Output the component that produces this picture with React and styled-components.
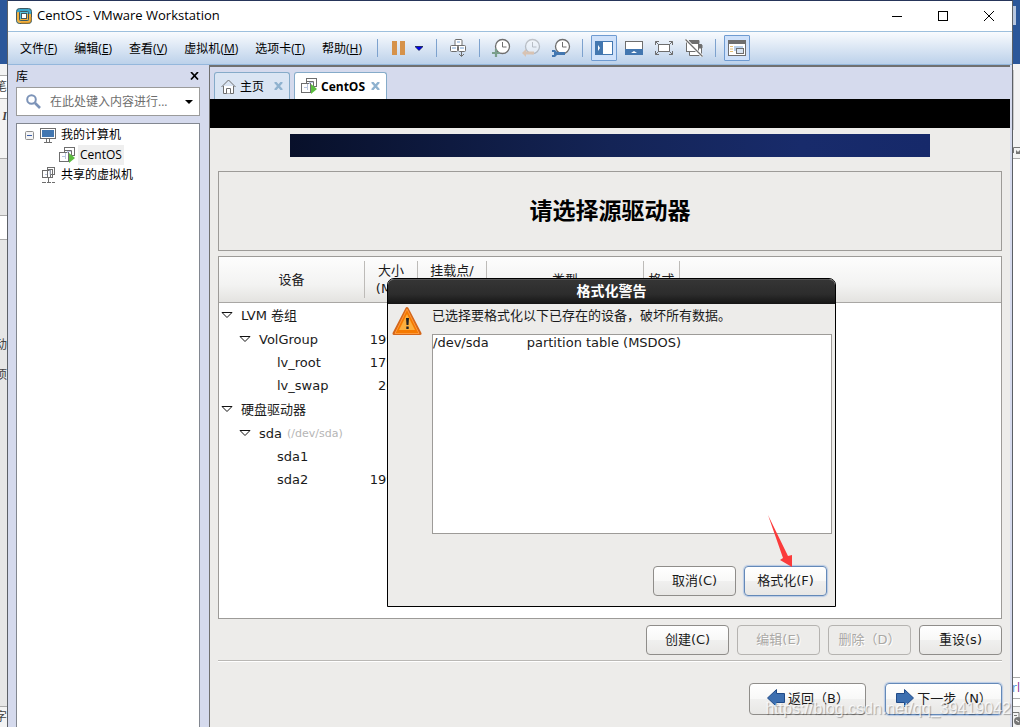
import React from 'react'
import styled, { createGlobalStyle } from 'styled-components'

const ROWS = [
  { name: 'LVM 卷组', level: 0, open: true },
  { name: 'VolGroup', level: 1, open: true, size: '19972' },
  { name: 'lv_root', level: 2, size: '17924' },
  { name: 'lv_swap', level: 2, size: '2048' },
  { name: '硬盘驱动器', level: 0, open: true },
  { name: 'sda', note: '(/dev/sda)', level: 1, open: true },
  { name: 'sda1', level: 2 },
  { name: 'sda2', level: 2, size: '19979' },
]

const MENUS = [
  ['文件', 'F'],
  ['编辑', 'E'],
  ['查看', 'V'],
  ['虚拟机', 'M'],
  ['选项卡', 'T'],
  ['帮助', 'H'],
]

export default function App() {
  return (
    <>
      <GlobalStyle />
      <Desktop>
        <LeftDocument />
        <Window>
          <TitleBar />
          <MenuBar />
          <Body>
            <Library />
            <Workspace>
              <Tabs>
                <Tab type="button">
                  <HomeIcon />
                  主页
                  <TabCloseIcon />
                </Tab>
                <Tab type="button" $active>
                  <MachineIcon />
                  CentOS
                  <TabCloseIcon />
                </Tab>
              </Tabs>
              <Blackout />
              <Installer />
            </Workspace>
          </Body>
        </Window>
        <RightDocument />
        <Watermark>https://blog.csdn.net/qq_39419042</Watermark>
      </Desktop>
    </>
  )
}

function LeftDocument() {
  return (
    <Strip>
      <Block $h={64} $bg="#2b579a" />
      <Block $h={11} $bg="#f3f3f3" />
      <Block $h={23} $bg="#fff" $line>笔</Block>
      <Block $h={60} $bg="linear-gradient(#ababab 1px, #f3f3f3 1px)"><Slant>I</Slant></Block>
      <Block $h={57} $bg="#e6e6e6" $line />
      <Block $h={24} $bg="#fff" $line />
      <Block $h={91} $bg="#e6e6e6" $line />
      <Block $h={30} $bg="#e6e6e6">动</Block>
      <Block $h={30} $bg="#e6e6e6">项</Block>
      <Block $h={316} $bg="#e6e6e6" />
      <Block $bg="#f3f3f3" $line>字</Block>
    </Strip>
  )
}

function RightDocument() {
  return (
    <Strip>
      <Block $h={6} $bg="#2b579a" />
      <Block $h={19} $bg="linear-gradient(90deg, #b8c7df 3px, #2b579a 3px)" />
      <Block $h={39} $bg="#2b579a" />
      <Block $h={6} $bg="#f3f3f3" />
      <Block $h={60} $bg="linear-gradient(90deg, #c9c9c9 1px, #f3f3f3 1px)" />
      <Block $h={12} $bg="#f3f3f3" />
      <Block $h={16} $bg="#f3f3f3">
        <svg width="7" height="9" viewBox="0 0 7 9">
          <path d="M.5 7V1.500H7" fill="none" stroke="#777" />
          <path d="M3 4l2 2 2-2v4H3z" fill="#777" />
        </svg>
      </Block>
      <Block $h={519} $bg="#fff" $line />
      <Block $h={21} $bg="#fff" $line><Code>r<b>l</b></Code></Block>
      <Block $h={8} $bg="#fff" $line />
      <Block $bg="#f3f3f3" $line>
        <svg width="7" height="18" viewBox="0 0 7 18">
          <path d="M0 4.500h6v5M1 7.500h3" fill="none" stroke="#777" />
          <circle cx="5" cy="13" r="4" fill="#777" />
          <path d="M3 12l3 2" stroke="#fff" />
        </svg>
      </Block>
    </Strip>
  )
}

function TitleBar() {
  return (
    <TitleRow>
      <svg width="16" height="16" viewBox="0 0 16 16">
        <rect x=".5" y=".5" width="15" height="15" rx="3" fill="#3aa7cc" stroke="#3f5960" />
        <path d="M1 5v7q0 3 3 3h8q3 0 3-3V6h-2.500v6.500h-9V4H2Q1 4 1 5z" fill="#f3b13f" />
        <path d="M15 9v3q0 3-3 3H5" fill="none" stroke="#c98722" />
        <rect x="3.500" y="3.500" width="9" height="9" rx="1" fill="#56c3dc" stroke="#3f5960" />
        <path d="M4.500 11.500h7V6" fill="none" stroke="#f3b13f" />
        <rect x="5.500" y="5.500" width="5" height="5" fill="#fff" stroke="#3f5960" />
      </svg>
      <h1>CentOS - VMware Workstation</h1>
      <WindowButton type="button" aria-label="Minimize">
        <svg width="10" height="10"><path d="M0 5.500h10" stroke="#000" /></svg>
      </WindowButton>
      <WindowButton type="button" aria-label="Maximize">
        <svg width="10" height="10"><rect x=".5" y=".5" width="9" height="9" fill="none" stroke="#000" /></svg>
      </WindowButton>
      <WindowButton type="button" aria-label="Close">
        <svg width="10" height="10"><path d="M0 0l10 10M10 0L0 10" stroke="#000" /></svg>
      </WindowButton>
    </TitleRow>
  )
}

function Clock({ faded, children }) {
  return (
    <svg width="20" height="20" viewBox="0 0 20 20">
      <g opacity={faded ? 0.35 : 1}>
        <circle cx="10.500" cy="8.500" r="7" fill="#fff" stroke="#6e6e6e" strokeWidth="1.300" />
        <path d="M10.500 4v5h4" fill="none" stroke="#6e6e6e" />
      </g>
      {children}
    </svg>
  )
}

function MenuBar() {
  return (
    <Toolbar>
      {MENUS.map(([label, key]) => (
        <MenuButton type="button" key={key}>{label}(<u>{key}</u>)</MenuButton>
      ))}
      <Divider $left={7} />
      <ToolButton type="button" aria-label="Pause" $left={6}>
        <svg width="14" height="14"><path d="M0 0h5v14H0zM8 0h5v14H8z" fill="#d6924a" /></svg>
      </ToolButton>
      <ToolButton type="button" aria-label="Power menu" $w={10}>
        <svg width="8" height="5"><path d="M0 .5h8L4 4.500z" fill="#0000f0" stroke="#001030" strokeWidth=".7" /></svg>
      </ToolButton>
      <Divider $left={12} />
      <ToolButton type="button" aria-label="Send keys" $w={42}>
        <svg width="18" height="20" viewBox="0 0 18 20" fill="#fff" stroke="#6e6e6e">
          <rect x="6" y="1.500" width="7" height="6" rx="1" />
          <rect x="1.500" y="7.500" width="7" height="6" rx="1" />
          <rect x="9.500" y="7.500" width="7" height="6" rx="1" />
          <path d="M8 4h3M3 10h4M11 10h4" stroke="#b9cfe8" strokeWidth="2" />
          <path d="M12.500 13v5M10 16l2.500 2.500L15 16" fill="none" />
        </svg>
      </ToolButton>
      <Divider $left={0} />
      <ToolButton type="button" aria-label="Take snapshot" $left={7}>
        <Clock><path d="M4 11v8M0 15h8" stroke="#7a9f8c" strokeWidth="2.200" /></Clock>
      </ToolButton>
      <ToolButton type="button" aria-label="Revert snapshot">
        <Clock faded><path d="M0 15l4-4v2.500h8v3H4V19z" fill="#d8c3b3" /></Clock>
      </ToolButton>
      <ToolButton type="button" aria-label="Manage snapshots">
        <Clock>
          <path d="M0 12h3l2 2h8v3H5l-2 2H0v-2h2v-3H0z" fill="#4377b0" />
        </Clock>
      </ToolButton>
      <Divider $left={5} />
      <ToolButton type="button" aria-label="Show library" $w={26} $left={8} $pressed>
        <svg width="18" height="14">
          <rect x=".5" y=".5" width="17" height="13" fill="#fff" stroke="#4377b0" />
          <path d="M0 0h8v14H0z" fill="#4377b0" />
          <path d="M3 4l2 3-2 3z" fill="#fff" />
        </svg>
      </ToolButton>
      <ToolButton type="button" aria-label="Thumbnails" $left={2}>
        <svg width="18" height="14">
          <rect x=".5" y=".5" width="17" height="13" fill="#fff" stroke="#6e6e6e" />
          <path d="M0 8h18v6H0z" fill="#4377b0" />
          <path d="M6 12l3-2 3 2z" fill="#fff" />
        </svg>
      </ToolButton>
      <ToolButton type="button" aria-label="Full screen">
        <svg width="18" height="14" fill="none" stroke="#6e6e6e">
          <rect x="3.500" y="3.500" width="11" height="7" fill="#fff" />
          <path d="M.5 4V.5H4M.5.5l3 3M14 .5h3.500V4M17.500.5l-3 3M.5 10v3.500H4M.5 13.500l3-3M14 13.500h3.500V10M17.500 13.500l-3-3" />
        </svg>
      </ToolButton>
      <ToolButton type="button" aria-label="Unity">
        <svg width="18" height="18" fill="#fff" stroke="#6e6e6e">
          <path d="M4.500 8v8.500h12V5.500h-3" />
          <path d="M14 6h3v3h-3z" fill="#6e6e6e" />
          <rect x="1.500" y="3.500" width="12" height="9" />
          <path d="M4 1.500h10v3H4z" fill="#6e6e6e" />
          <path d="M.5.5l17 17" stroke="#fff" strokeWidth="3" />
          <path d="M.5.5l17 17" strokeWidth="1.200" />
        </svg>
      </ToolButton>
      <Divider $left={6} />
      <ToolButton type="button" aria-label="Console view" $w={26} $left={8} $pressed>
        <svg width="18" height="16">
          <rect x=".5" y=".5" width="17" height="15" fill="#fff" stroke="#6e6e6e" />
          <path d="M0 0h18v4H0z" fill="#6e6e6e" />
          <path d="M2 6.500h3M2 9h3M2 11.500h3" stroke="#e2bd75" />
          <path d="M6 6h9v5H6z" fill="#b9cfe8" />
          <rect x="8.500" y="8.500" width="7" height="5" fill="#d8e4f2" stroke="#6e6e6e" />
        </svg>
      </ToolButton>
    </Toolbar>
  )
}

function Library() {
  return (
    <Sidebar>
      <SidebarHead>
        <h2>库</h2>
        <PlainButton type="button" aria-label="Close library">
          <svg width="10" height="8"><path d="M1 0l7 7.500M8 0L1 7.500" stroke="#000" strokeWidth="1.700" /></svg>
        </PlainButton>
      </SidebarHead>
      <Search>
        <svg width="15" height="15" viewBox="0 0 15 15" fill="none" stroke="#7c93b8">
          <circle cx="5.500" cy="5.500" r="4.300" strokeWidth="2" />
          <path d="M9 9l5 5" strokeWidth="2.600" />
        </svg>
        <input type="text" aria-label="搜索" placeholder="在此处键入内容进行..." />
        <PlainButton type="button" aria-label="Search options">
          <svg width="8" height="4"><path d="M0 0h8L4 4z" fill="#000" /></svg>
        </PlainButton>
      </Search>
      <Tree>
        <TreeItem $indent={8}>
          <svg width="9" height="9">
            <rect x=".5" y=".5" width="8" height="8" rx="1" fill="#f4f4f4" stroke="#8f8f8f" />
            <path d="M2 4.500h5" stroke="#3c5fa8" />
          </svg>
          <svg width="16" height="15">
            <rect x=".5" y=".5" width="15" height="10" fill="#fff" stroke="#6e6e6e" />
            <path d="M2 2h12v7H2z" fill="#4377b0" />
            <path d="M6.500 11v3M9.500 11v3M4 14.500h8" stroke="#6e6e6e" />
          </svg>
          <span>我的计算机</span>
        </TreeItem>
        <TreeItem $indent={42} $selected>
          <MachineIcon />
          <span>CentOS</span>
        </TreeItem>
        <TreeItem $indent={25}>
          <svg width="14" height="16" fill="#fff" stroke="#6e6e6e">
            <rect x="5.500" y=".5" width="7" height="7" />
            <rect x=".5" y="3.500" width="8" height="7" />
            <path d="M8 2.500v5M5.500 5v3M3 7.500h3" stroke="#b9c6e0" />
            <rect x="5.500" y="2.500" width="5" height="8" fill="none" />
            <path d="M6.500 11v4M0 15.500h4M5 15.500h4M10 15.500h3" />
          </svg>
          <span>共享的虚拟机</span>
        </TreeItem>
      </Tree>
    </Sidebar>
  )
}

function Installer() {
  return (
    <Screen>
      <Banner />
      <Heading>请选择源驱动器</Heading>
      <Devices>
        <table>
          <colgroup>
            <col width="146" />
            <col width="53" />
            <col width="69" />
            <col width="157" />
            <col width="36" />
            <col />
          </colgroup>
          <thead>
            <tr>
              <th><HeadCell $line>设备</HeadCell></th>
              <th><HeadCell $line>大小<br />(MB)</HeadCell></th>
              <th><HeadCell $line>挂载点/<br />RAID/卷</HeadCell></th>
              <th><HeadCell $line>类型</HeadCell></th>
              <th><HeadCell $line>格式</HeadCell></th>
              <th><HeadCell /></th>
            </tr>
          </thead>
          <tbody>
            {ROWS.map((row) => (
              <DeviceRow key={row.name} $leaf={!row.open}>
                <td>
                  <Device $level={row.level}>
                    {row.open && (
                      <PlainButton type="button" aria-label="Collapse">
                        <svg width="12" height="8"><path d="M1 1.500h10L6 6.500z" fill="#fff" stroke="#111" /></svg>
                      </PlainButton>
                    )}
                    <span>{row.name}</span>
                    {row.note && <small>{row.note}</small>}
                  </Device>
                </td>
                <SizeCell>{row.size}</SizeCell>
                <td colSpan="4" />
              </DeviceRow>
            ))}
          </tbody>
        </table>
      </Devices>
      <Actions>
        <Button type="button">创建(C)</Button>
        <Button type="button" disabled>编辑(E)</Button>
        <Button type="button" disabled>删除（D）</Button>
        <Button type="button">重设(s)</Button>
      </Actions>
      <Navigation>
        <Button type="button" $wide>
          <ArrowIcon />
          返回（B）
        </Button>
        <Button type="button" $wide $focus>
          <ArrowIcon flip />
          下一步（N）
        </Button>
      </Navigation>
      <Dialog role="dialog" aria-labelledby="warning-title">
        <DialogTitle id="warning-title">格式化警告</DialogTitle>
        <DialogBody>
          <svg width="30" height="30" viewBox="0 0 30 30">
            <path d="M15 2.500L28 27.500H2z" fill="#f57900" stroke="#d4661a" strokeWidth="3" strokeLinejoin="round" />
            <path d="M15 3L27 27.500H3z" fill="#f57900" stroke="#ff9a3c" strokeLinejoin="round" />
            <path d="M15 8l8 16H7z" fill="#fcaf3e" />
            <path d="M14 12h3l-.5 7h-2zM14.300 20.500h2.400v2.400h-2.400z" fill="#222" />
          </svg>
          <DialogMain>
            <p>已选择要格式化以下已存在的设备，破坏所有数据。</p>
            <Formats>
              <span>/dev/sda</span>
              <span>partition table (MSDOS)</span>
            </Formats>
          </DialogMain>
        </DialogBody>
        <DialogActions>
          <Button type="button">取消(C)</Button>
          <Button type="button" $focus>格式化(F)</Button>
          <Pointer width="26" height="52" viewBox="0 0 26 52">
            <path d="M0 0L15 43l-3 2 12 7V40l-4 1z" fill="#fb3b3b" />
          </Pointer>
        </DialogActions>
      </Dialog>
    </Screen>
  )
}

function HomeIcon() {
  return (
    <svg width="15" height="15" fill="#fff" stroke="#6e6e6e">
      <path d="M2.500 7v7.500h10V7" />
      <path d="M.5 8L7.500 1l7 7" fill="none" />
      <path d="M5.500 14.500v-5h4v5" />
    </svg>
  )
}

function MachineIcon() {
  return (
    <svg width="16" height="16" fill="#fff" stroke="#6e6e6e">
      <rect x="5.500" y=".5" width="10" height="8" />
      <rect x=".5" y="5.500" width="9" height="9" />
      <path d="M3 9.500h4M6.500 6v6M8 4.500h4M8.500 3v3" stroke="#b9c6e0" />
      <path d="M5.500 6V3.500h7V8" fill="none" />
      <path d="M10 6v10l6-5z" fill="#5bbd3f" stroke="none" />
    </svg>
  )
}

function TabCloseIcon() {
  return <svg width="9" height="8"><path d="M1 0l7 8M8 0L1 8" stroke="#8fb2cf" strokeWidth="2.400" /></svg>
}

function ArrowIcon({ flip }) {
  return (
    <svg width="20" height="20" viewBox="0 0 20 20">
      <path
        d={flip ? 'M1.500 5.500h8v-4l9 8.500-9 8.500v-4h-8z' : 'M18.500 5.500h-8v-4L1.500 10l9 8.500v-4h8z'}
        fill="#3d6fb0"
        stroke="#204a87"
      />
    </svg>
  )
}

const GlobalStyle = createGlobalStyle`
  * {
    box-sizing: border-box;
  }
  body {
    margin: 0;
    font-family: 'Open Sans', 'Noto Sans CJK SC', sans-serif;
    font-size: 12px;
    color: #000;
  }
  button, input {
    font: inherit;
    color: inherit;
    padding: 0;
    border: none;
    background: none;
  }
  h1, h2, p {
    margin: 0;
    font-size: inherit;
    font-weight: normal;
  }
  svg {
    display: block;
    flex: none;
  }
`

const Desktop = styled.div`
  position: relative;
  display: flex;
  min-height: 100vh;
  overflow: hidden;
`

const Strip = styled.div`
  width: 7px;
  flex: none;
  display: flex;
  flex-direction: column;
  overflow: hidden;
`

const Block = styled.div`
  height: ${(p) => (p.$h ? `${p.$h}px` : 'auto')};
  flex: ${(p) => (p.$h ? 'none' : '1')};
  display: flex;
  align-items: center;
  justify-content: flex-end;
  background: ${(p) => p.$bg};
  border-top: ${(p) => (p.$line ? '1px solid #ababab' : 'none')};
  color: #444;
  line-height: 16px;
`

const Slant = styled.i`
  padding-bottom: 24px;
  font-family: 'Liberation Serif', serif;
  font-weight: bold;
`

const Code = styled.span`
  color: #4a90d9;
  b {
    font-weight: normal;
    color: #8b2f8f;
  }
`

const Window = styled.div`
  flex: 1;
  min-width: 0;
  display: flex;
  flex-direction: column;
  border: 1px solid #5c6066;
  border-top-color: #26355a;
  border-bottom: none;
  background: #d5daed;
`

const TitleRow = styled.header`
  display: flex;
  align-items: center;
  height: 30px;
  padding-left: 8px;
  background: #fff;
  h1 {
    flex: 1;
    margin-left: 5px;
    padding-bottom: 2px;
    font-size: 13px;
  }
`

const WindowButton = styled.button`
  width: 46px;
  height: 30px;
  display: flex;
  align-items: center;
  justify-content: center;
`

const Toolbar = styled.nav`
  display: flex;
  align-items: center;
  height: 34px;
  padding-left: 3px;
  border-top: 1px solid #9dbfdd;
  border-bottom: 1px solid #94b7dc;
  background: linear-gradient(#f9fbfe, #bcd1ea);
`

const MenuButton = styled.button`
  padding: 0 8px 0 9px;
  white-space: nowrap;
`

const Divider = styled.span`
  width: 1px;
  height: 18px;
  margin-left: ${(p) => p.$left}px;
  background: #7da2ce;
`

const ToolButton = styled.button`
  width: ${(p) => p.$w || 30}px;
  height: 26px;
  margin-left: ${(p) => p.$left || 0}px;
  flex: none;
  display: flex;
  align-items: center;
  justify-content: center;
  border: ${(p) => (p.$pressed ? '1px solid #6f9bd1' : 'none')};
  border-radius: 1px;
  background: ${(p) => (p.$pressed ? '#cfe1fa' : 'none')};
`

const Body = styled.div`
  flex: 1;
  display: flex;
`

const Sidebar = styled.aside`
  width: 201px;
  flex: none;
  display: flex;
  flex-direction: column;
  padding: 0 9px 0 8px;
`

const SidebarHead = styled.div`
  display: flex;
  align-items: center;
  justify-content: space-between;
  height: 22px;
`

const PlainButton = styled.button`
  display: flex;
  align-items: center;
  justify-content: center;
  flex: none;
`

const Search = styled.div`
  display: flex;
  align-items: center;
  height: 29px;
  padding: 0 6px 0 9px;
  border: 1px solid #9b9b9b;
  background: #fff;
  input {
    flex: 1;
    min-width: 0;
    margin-left: 9px;
    outline: none;
  }
  input::placeholder {
    color: #6d6d6d;
    opacity: 1;
  }
`

const Tree = styled.div`
  flex: 1;
  margin-top: 7px;
  padding-top: 1px;
  border: 1px solid #828790;
  border-bottom: none;
  background: #fff;
`

const TreeItem = styled.div`
  display: flex;
  align-items: center;
  gap: 6px;
  height: 20px;
  padding-left: ${(p) => p.$indent}px;
  span {
    margin-left: -3px;
    padding: 0 2px;
    line-height: 20px;
    background: ${(p) => (p.$selected ? '#efefef' : 'none')};
  }
`

const Workspace = styled.main`
  flex: 1;
  min-width: 0;
  display: flex;
  flex-direction: column;
  margin-right: 2px;
  border-top: 2px solid #707070;
  border-left: 1px solid #707070;
`

const Tabs = styled.div`
  display: flex;
  align-items: flex-end;
  gap: 4px;
  height: 32px;
  padding-left: 4px;
`

const Tab = styled.button`
  display: flex;
  align-items: center;
  gap: 4px;
  height: 27px;
  padding: 0 6px;
  border: 1px solid #85abc9;
  border-bottom: none;
  border-radius: 3px 3px 0 0;
  background: ${(p) => (p.$active ? '#fff' : '#dae5f3')};
  font-weight: ${(p) => (p.$active ? 'bold' : 'normal')};
  svg:last-child {
    margin-left: ${(p) => (p.$active ? 2 : 6)}px;
  }
`

const Blackout = styled.div`
  height: 29px;
  background: #000;
`

const Screen = styled.section`
  position: relative;
  flex: 1;
  display: flex;
  flex-direction: column;
  padding: 6px 8px 12px;
  background: #edecea;
  font-family: 'DejaVu Sans', 'Noto Sans CJK SC', sans-serif;
  font-size: 13px;
  color: #1a1a1a;
`

const Banner = styled.div`
  height: 23px;
  margin: 0 72px;
  background: linear-gradient(90deg, #08102a, #142456 50%, #182b6b 80%, #16296a);
`

const Heading = styled.h2`
  display: flex;
  align-items: center;
  justify-content: center;
  height: 80px;
  margin-top: 14px;
  padding-bottom: 4px;
  border: 1px solid #9d9b98;
  font-size: 23px;
  font-weight: bold;
  color: #000;
`

const Devices = styled.div`
  flex: 1;
  margin-top: 5px;
  border: 1px solid #9d9b98;
  background: #fff;
  table {
    width: 100%;
    table-layout: fixed;
    border-collapse: separate;
    border-spacing: 0;
  }
  td {
    padding: 0;
  }
  th {
    padding: 4px 0;
    border-bottom: 1px solid #a9a7a4;
    font-weight: normal;
  }
  thead tr {
    background: linear-gradient(#fdfdfd, #f3f3f2 60%, #e3e2df);
  }
`

const HeadCell = styled.div`
  display: flex;
  align-items: center;
  justify-content: center;
  height: 37px;
  line-height: 18px;
  border-right: ${(p) => (p.$line ? '1px solid #bdbbb8' : 'none')};
`

const DeviceRow = styled.tr`
  height: ${(p) => (p.$leaf ? 23 : 24)}px;
`

const Device = styled.div`
  display: flex;
  align-items: center;
  padding-left: ${(p) => p.$level * 18 + (p.$level === 2 ? 22 : 2)}px;
  line-height: 23px;
  white-space: nowrap;
  button {
    margin-right: 8px;
  }
  small {
    margin-left: 5px;
    font-size: 11px;
    color: #b5b5b5;
  }
`

const SizeCell = styled.td`
  && {
    padding-right: 7px;
  }
  text-align: right;
`

const Actions = styled.div`
  display: flex;
  justify-content: flex-end;
  gap: 8px;
  padding: 6px 0 5px;
  border-bottom: 1px solid #bab8b5;
  box-shadow: 0 1px #fff;
`

const Navigation = styled.div`
  display: flex;
  justify-content: flex-end;
  gap: 19px;
  padding-top: 22px;
`

const Button = styled.button`
  display: flex;
  align-items: center;
  justify-content: center;
  gap: 2px;
  width: ${(p) => (p.$wide ? 117 : 83)}px;
  height: ${(p) => (p.$wide ? 32 : 30)}px;
  padding-bottom: 3px;
  border: 1px solid ${(p) => (p.$focus ? '#6489b8' : '#8f8d8a')};
  border-radius: 4px;
  background: linear-gradient(#fff, #f8f8f7 50%, #f0f0ef 50%, #e8e7e5);
  box-shadow: ${(p) => (p.$focus ? '0 0 1px 1px #b9cbe5' : 'none')};
  white-space: nowrap;
  &:disabled {
    border-color: #b5b3b0;
    background: #edecea;
    color: #aaa8a5;
    text-shadow: 1px 1px #fff;
  }
`

const Dialog = styled.div`
  position: absolute;
  top: 150px;
  left: calc(50% - 223px);
  width: 449px;
  border: 1px solid #000;
  border-radius: 7px 7px 0 0;
  background: #edecea;
`

const DialogTitle = styled.h2`
  height: 25px;
  line-height: 22px;
  border-radius: 6px 6px 0 0;
  border-top: 1px solid #555;
  background: linear-gradient(#353535, #2c2c2c 60%, #151515);
  color: #fff;
  font-size: 14px;
  font-weight: bold;
  text-align: center;
`

const DialogBody = styled.div`
  display: flex;
  gap: 10px;
  padding: 2px 3px 0 4px;
`

const DialogMain = styled.div`
  flex: 1;
  p {
    line-height: 20px;
  }
`

const Formats = styled.div`
  display: flex;
  gap: 38px;
  height: 200px;
  margin-top: 8px;
  border: 1px solid #9d9b98;
  background: #fff;
  line-height: 16px;
`

const DialogActions = styled.div`
  position: relative;
  display: flex;
  justify-content: flex-end;
  gap: 8px;
  padding: 32px 8px 10px;
`

const Pointer = styled.svg`
  position: absolute;
  top: -19px;
  right: 41px;
`

const Watermark = styled.div`
  position: absolute;
  right: 9px;
  bottom: 8px;
  font-family: 'Liberation Sans', sans-serif;
  font-size: 16px;
  line-height: 20px;
  color: rgba(255, 255, 255, 0.75);
  text-shadow: 1px 1px 1px rgba(0, 0, 0, 0.3);
  pointer-events: none;
`
